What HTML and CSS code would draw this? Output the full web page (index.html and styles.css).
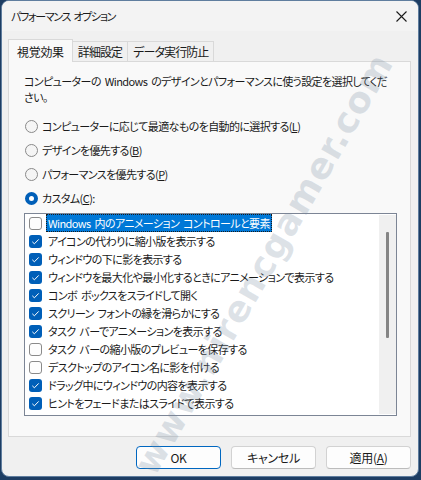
FILE: index.html
```html
<!DOCTYPE html>
<html lang="ja">
<head>
    <meta charset="UTF-8">
    <title>パフォーマンス オプション</title>
    <link rel="stylesheet" href="styles.css">
</head>
<body>
    <div class="window">
        <div class="titlebar">
            <span class="title">パフォーマンス オプション</span>
            <span class="close">
                <svg width="11" height="11" viewBox="0 0 11 11"><path d="M0.5 0.5 L10.5 10.5 M10.5 0.5 L0.5 10.5" stroke="#1a1a1a" stroke-width="1.1" fill="none"/></svg>
            </span>
        </div>
        <div class="body">
            <div class="tabs">
                <div class="tab active">視覚効果</div>
                <div class="tab">詳細設定</div>
                <div class="tab">データ実行防止</div>
            </div>
            <div class="panel">
                <p class="desc">コンピューターの Windows のデザインとパフォーマンスに使う設定を選択してください。</p>
                <div class="radios">
                    <div class="radio"><span class="dot"></span>コンピューターに応じて最適なものを自動的に選択する(<u>L</u>)</div>
                    <div class="radio"><span class="dot"></span>デザインを優先する(<u>B</u>)</div>
                    <div class="radio"><span class="dot"></span>パフォーマンスを優先する(<u>P</u>)</div>
                    <div class="radio"><span class="dot on"></span>カスタム(<u>C</u>):</div>
                </div>
                <div class="listbox">
                    <ul class="items">
                        <li><span class="box"></span><span class="label selected">Windows 内のアニメーション コントロールと要素</span></li>
                        <li><span class="box on"></span><span class="label">アイコンの代わりに縮小版を表示する</span></li>
                        <li><span class="box on"></span><span class="label">ウィンドウの下に影を表示する</span></li>
                        <li><span class="box on"></span><span class="label">ウィンドウを最大化や最小化するときにアニメーションで表示する</span></li>
                        <li><span class="box on"></span><span class="label">コンボ ボックスをスライドして開く</span></li>
                        <li><span class="box on"></span><span class="label">スクリーン フォントの縁を滑らかにする</span></li>
                        <li><span class="box on"></span><span class="label">タスク バーでアニメーションを表示する</span></li>
                        <li><span class="box"></span><span class="label">タスク バーの縮小版のプレビューを保存する</span></li>
                        <li><span class="box"></span><span class="label">デスクトップのアイコン名に影を付ける</span></li>
                        <li><span class="box on"></span><span class="label">ドラッグ中にウィンドウの内容を表示する</span></li>
                        <li><span class="box on"></span><span class="label">ヒントをフェードまたはスライドで表示する</span></li>
                    </ul>
                    <div class="scrollbar"><div class="thumb"></div></div>
                </div>
            </div>
            <div class="buttons">
                <button class="btn default">OK</button>
                <button class="btn">キャンセル</button>
                <button class="btn">適用(<u>A</u>)</button>
            </div>
        </div>
        <div class="watermark">www.nirencgamer.com</div>
    </div>
</body>
</html>
```

FILE: styles.css
```css
body {
    margin: 0;
    background: #1d3d63;
    font-family: "Noto Sans CJK JP", "Noto Sans", sans-serif;
    font-size: 11px;
    letter-spacing: -0.6px;
    word-spacing: 2px;
    font-feature-settings: "palt";
    color: #1a1a1a;
}
.window {
    position: relative;
    box-sizing: border-box;
    width: 418px;
    height: 477px;
    margin-left: 1px;
    border: 1px solid #5f7d9e;
    border-radius: 8px;
    background: #f0f0f0;
    overflow: hidden;
}
.titlebar {
    display: flex;
    align-items: center;
    justify-content: space-between;
    height: 30px;
    padding: 0 10px 0 9px;
    background: #f3f3f3;
}
.title {
    letter-spacing: -1.3px;
    line-height: 30px;
}
.close {
    display: flex;
    margin-right: 1px;
}
.body {
    padding: 8px 7px 0 6px;
}
.tabs {
    display: flex;
    align-items: flex-end;
    position: relative;
    z-index: 1;
}
.tab {
    box-sizing: border-box;
    height: 20px;
    padding: 0 5px;
    line-height: 19px;
    font-size: 12px;
    letter-spacing: -0.9px;
    border: 1px solid #d9d9d9;
    border-bottom: none;
    border-left: none;
    background: #f0f0f0;
}
.tab.active {
    height: 23px;
    margin-bottom: -1px;
    padding: 0 8px;
    line-height: 24px;
    letter-spacing: -0.3px;
    border-left: 1px solid #d9d9d9;
    background: #f9f9f9;
}
.panel {
    box-sizing: border-box;
    height: 376px;
    padding: 11px 13px 0 15px;
    border: 1px solid #d9d9d9;
    background: #f9f9f9;
}
.desc {
    margin: 0 7px 0 0;
    line-height: 16px;
}
.radios {
    margin-top: 9px;
}
.radio {
    display: flex;
    align-items: center;
    height: 24px;
}
.dot {
    box-sizing: border-box;
    width: 13px;
    height: 13px;
    margin: 0 4px 0 1px;
    border: 1px solid #8a8a8a;
    border-radius: 50%;
    background: #f5f5f5;
}
.dot.on {
    border: 4px solid #005fb8;
    background: #fff;
}
.listbox {
    display: flex;
    box-sizing: border-box;
    height: 203px;
    margin-top: 3px;
    border: 1px solid #7c8595;
    background: #fff;
}
.items {
    flex: 1;
    list-style: none;
    margin: 0;
    padding: 0 0 0 4px;
}
.items li {
    display: flex;
    align-items: center;
    height: 18px;
    white-space: nowrap;
}
.box {
    box-sizing: border-box;
    flex: none;
    width: 13px;
    height: 13px;
    margin-right: 4px;
    border: 1px solid #8a8a8a;
    border-radius: 3px;
    background: #fdfdfd;
}
.box.on {
    border: none;
    background: #005fb8 url("data:image/svg+xml,%3Csvg xmlns='http://www.w3.org/2000/svg' width='13' height='13'%3E%3Cpath d='M3.3 6.8 L5.4 8.8 L9.7 4.4' stroke='white' stroke-width='1' fill='none'/%3E%3C/svg%3E") no-repeat;
}
.label {
    padding: 0 1px;
    line-height: 16px;
    border: 1px solid transparent;
}
.label.selected {
    background: #0078d7;
    color: #fff;
    border: 1px dotted #1a1a1a;
}
.scrollbar {
    width: 17px;
    margin: 1px 0;
    background: #f0f0f0;
    padding-top: 17px;
}
.thumb {
    width: 3px;
    height: 106px;
    margin-left: 7px;
    border-radius: 1px;
    background: #858585;
}
.buttons {
    display: flex;
    justify-content: flex-end;
    gap: 10px;
    margin-top: 9px;
}
.btn {
    box-sizing: border-box;
    width: 85px;
    height: 23px;
    padding: 0;
    font: inherit;
    font-size: 12px;
    letter-spacing: -0.3px;
    color: #1a1a1a;
    background: #fdfdfd;
    border: 1px solid #d2d2d2;
    border-bottom-color: #bcbcbc;
    border-radius: 4px;
}
.btn.default {
    border: 1px solid #0067c0;
}
.watermark {
    position: absolute;
    left: 124px;
    top: 460px;
    transform: rotate(-60deg);
    transform-origin: 0 0;
    font-family: "DejaVu Sans", sans-serif;
    font-size: 36px;
    font-weight: bold;
    letter-spacing: 1px;
    word-spacing: 0;
    color: rgba(120, 140, 160, 0.25);
    pointer-events: none;
    white-space: nowrap;
}
```
